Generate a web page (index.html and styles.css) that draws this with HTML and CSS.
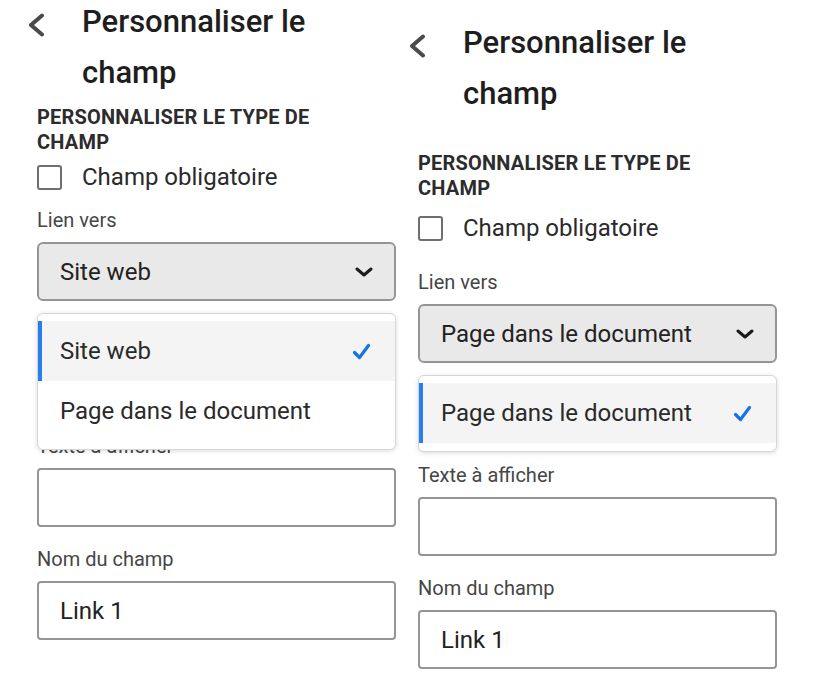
FILE: index.html
```html
<!DOCTYPE html>
<html lang="fr">
<head>
<meta charset="utf-8">
<title>Personnaliser le champ</title>
<link rel="stylesheet" href="styles.css">
</head>
<body>
<div class="page">
  <section class="panel panel--left">
    <header class="panel-header">
      <svg class="back-icon" viewBox="0 0 18 24" width="18" height="24" aria-hidden="true"><path d="M15 2.5 L4 12 L15 21.5" fill="none" stroke="#4b4b4b" stroke-width="4" stroke-linecap="round" stroke-linejoin="round"/></svg>
      <h1 class="panel-title">Personnaliser le champ</h1>
    </header>
    <h2 class="section-title">Personnaliser le type de champ</h2>
    <div class="checkbox-row"><span class="checkbox"></span><span class="checkbox-label">Champ obligatoire</span></div>
    <div class="field field--link">
      <div class="field-label">Lien vers</div>
      <div class="picker-wrap">
        <div class="picker">
          <span>Site web</span>
          <svg class="picker-chevron" viewBox="0 0 18 10" width="18" height="10" aria-hidden="true"><path d="M2 2 L9 8 L16 2" fill="none" stroke="#1b1b1b" stroke-width="3" stroke-linecap="round" stroke-linejoin="round"/></svg>
        </div>
        <div class="popover">
          <div class="menu-item menu-item--selected">
            <span>Site web</span>
            <svg class="check" viewBox="0 0 19 17" width="19" height="17" aria-hidden="true"><path d="M2.5 9.5 L7.5 14.5 L16.5 2.5" fill="none" stroke="#1473e6" stroke-width="3.2" stroke-linecap="round" stroke-linejoin="round"/></svg>
          </div>
          <div class="menu-item"><span>Page dans le document</span></div>
        </div>
      </div>
    </div>
    <div class="field field--text">
      <div class="field-label">Texte à afficher</div>
      <div class="textbox"></div>
    </div>
    <div class="field field--name">
      <div class="field-label">Nom du champ</div>
      <div class="textbox">Link 1</div>
    </div>
  </section>

  <section class="panel panel--right">
    <header class="panel-header">
      <svg class="back-icon" viewBox="0 0 18 24" width="18" height="24" aria-hidden="true"><path d="M15 2.5 L4 12 L15 21.5" fill="none" stroke="#4b4b4b" stroke-width="4" stroke-linecap="round" stroke-linejoin="round"/></svg>
      <h1 class="panel-title">Personnaliser le champ</h1>
    </header>
    <h2 class="section-title">Personnaliser le type de champ</h2>
    <div class="checkbox-row"><span class="checkbox"></span><span class="checkbox-label">Champ obligatoire</span></div>
    <div class="field field--link">
      <div class="field-label">Lien vers</div>
      <div class="picker-wrap">
        <div class="picker">
          <span>Page dans le document</span>
          <svg class="picker-chevron" viewBox="0 0 18 10" width="18" height="10" aria-hidden="true"><path d="M2 2 L9 8 L16 2" fill="none" stroke="#1b1b1b" stroke-width="3" stroke-linecap="round" stroke-linejoin="round"/></svg>
        </div>
        <div class="popover">
          <div class="menu-item menu-item--selected">
            <span>Page dans le document</span>
            <svg class="check" viewBox="0 0 19 17" width="19" height="17" aria-hidden="true"><path d="M2.5 9.5 L7.5 14.5 L16.5 2.5" fill="none" stroke="#1473e6" stroke-width="3.2" stroke-linecap="round" stroke-linejoin="round"/></svg>
          </div>
        </div>
      </div>
    </div>
    <div class="field field--text">
      <div class="field-label">Texte à afficher</div>
      <div class="textbox"></div>
    </div>
    <div class="field field--name">
      <div class="field-label">Nom du champ</div>
      <div class="textbox">Link 1</div>
    </div>
  </section>
</div>
</body>
</html>
```

FILE: styles.css
```css
* { box-sizing: border-box; }

html, body {
  margin: 0;
  padding: 0;
  background: #ffffff;
}

body {
  font-family: Roboto, "Liberation Sans", sans-serif;
  color: #222222;
  overflow: hidden;
}

.page {
  display: flex;
  align-items: flex-start;
  gap: 22px;
  padding-left: 37px;
}

.panel {
  width: 359px;
  flex: none;
}

.panel--right {
  padding-top: 21px;
}

.panel-header {
  display: flex;
  align-items: flex-start;
  margin-left: -10px;
  margin-top: -4px;
}

.back-icon {
  flex: none;
  margin-top: 17px;
  display: block;
}

.panel-title {
  margin: 0 0 0 37px;
  max-width: 260px;
  font-size: 31px;
  font-weight: 500;
  line-height: 51px;
  color: #1e1e1e;
}

.section-title {
  margin: 7px 0 0 0;
  max-width: 310px;
  font-size: 20px;
  font-weight: 700;
  line-height: 25px;
  text-transform: uppercase;
  letter-spacing: 0.2px;
  color: #2c2c2c;
}

.panel--right .section-title {
  margin-top: 32px;
}

.checkbox-row {
  display: flex;
  align-items: center;
  height: 32px;
  margin-top: 6px;
}

.panel--right .checkbox-row {
  margin-top: 11px;
}

.checkbox {
  width: 25px;
  height: 25px;
  border: 2px solid #6f6f6f;
  border-radius: 3px;
  flex: none;
}

.checkbox-label {
  margin-left: 20px;
  font-size: 24px;
  line-height: 32px;
  color: #2a2a2a;
}

.field-label {
  font-size: 20px;
  line-height: 24px;
  color: #464646;
  margin-bottom: 10px;
}

.field--link {
  margin-top: 15px;
}

.panel--right .field--link {
  margin-top: 26px;
}

.field--text {
  margin-top: 133px;
}

.panel--right .field--text {
  margin-top: 100px;
}

.field--name {
  margin-top: 20px;
}

.picker-wrap {
  position: relative;
}

.picker {
  height: 59px;
  display: flex;
  align-items: center;
  justify-content: space-between;
  padding: 0 21px 0 21px;
  background: #e9e9e9;
  border: 2px solid #959595;
  border-radius: 6px;
  font-size: 24px;
  color: #222222;
}

.picker-chevron {
  display: block;
  flex: none;
}

.popover {
  position: absolute;
  left: 0;
  right: 0;
  top: calc(100% + 12px);
  z-index: 2;
  background: #ffffff;
  border: 1px solid #d6d6d6;
  border-radius: 6px;
  padding: 7px 0 8px 0;
  box-shadow: 0 1px 5px rgba(0, 0, 0, 0.14);
}

.menu-item {
  height: 60px;
  display: flex;
  align-items: center;
  justify-content: space-between;
  padding: 0 24px 0 22px;
  font-size: 24px;
  color: #2a2a2a;
}

.menu-item--selected {
  background: #f4f4f4;
  border-left: 4px solid #2680eb;
  padding-left: 18px;
}

.check {
  display: block;
  flex: none;
}

.textbox {
  height: 59px;
  display: flex;
  align-items: center;
  padding: 0 21px;
  background: #ffffff;
  border: 2px solid #959595;
  border-radius: 4px;
  font-size: 24px;
  color: #222222;
}
```
